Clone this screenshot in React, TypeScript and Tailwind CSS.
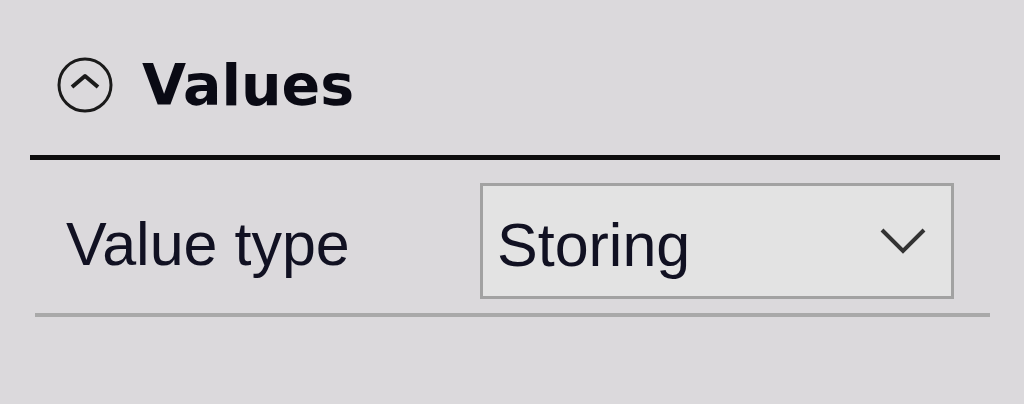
export default function App() {
  return (
    <div className="w-[1024px] h-[404px] bg-[#dbd9dc] flex flex-col overflow-hidden">
      {/* Section header */}
      <div className="flex items-center h-[56px] mt-[57px] pl-[57px]">
        <svg width="56" height="56" viewBox="0 0 56 56" className="shrink-0">
          <circle cx="28" cy="28" r="26" fill="none" stroke="#1a1a1a" strokeWidth="3" />
          <path d="M15 30 L28 19 L41 30" fill="none" stroke="#1a1a1a" strokeWidth="4" strokeLinejoin="round" />
        </svg>
        <span className="ml-[29px] text-[57px] leading-none font-bold text-[#0a0a14] font-['DejaVu_Sans',sans-serif]">
          Values
        </span>
      </div>

      <div className="mt-[42px] ml-[30px] mr-[24px] h-[5px] bg-[#0d0d0d]" />

      {/* Property row */}
      <div className="mt-[23px] flex h-[116px]">
        <div className="w-[480px] shrink-0 pl-[66px] pt-[31px] text-[61px] leading-none text-[#111122] font-['Liberation_Sans',sans-serif]">
          Value type
        </div>
        <div className="w-[474px] h-[116px] shrink-0 border-[3px] border-[#a2a2a2] bg-[#e3e3e3] flex items-center pl-[14px] pr-[24px]">
          <span className="flex-1 pt-[9px] text-[61px] leading-none text-[#111122] font-['Liberation_Sans',sans-serif]">
            Storing
          </span>
          <svg width="48" height="30" viewBox="0 0 48 30" className="shrink-0">
            <path d="M3 4 L24 25 L45 4" fill="none" stroke="#333" strokeWidth="4" />
          </svg>
        </div>
      </div>

      <div className="mt-[14px] ml-[35px] w-[955px] h-[4px] bg-[#a9a9a9]" />
    </div>
  );
}
